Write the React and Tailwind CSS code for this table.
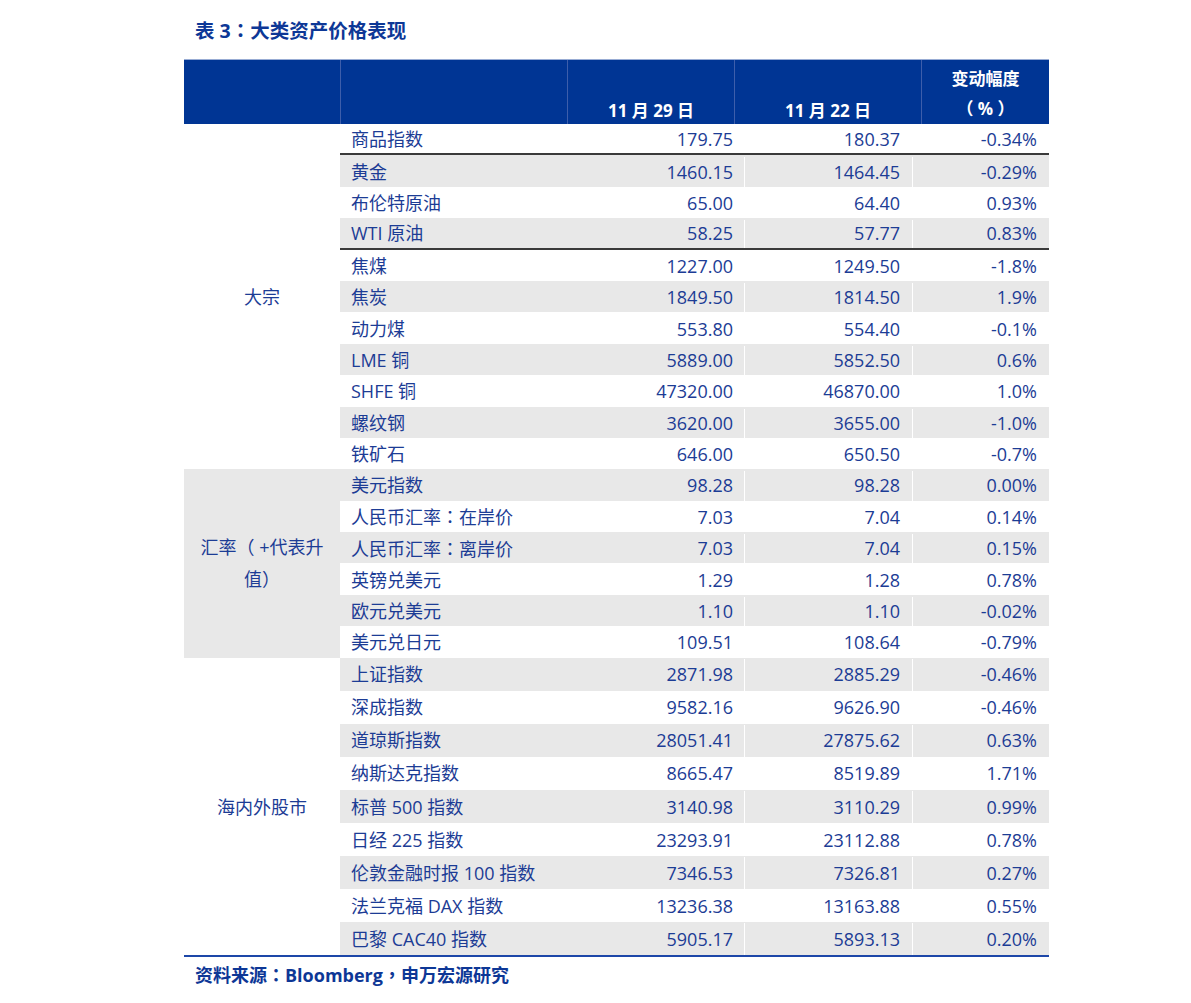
import React from "react";

const P = ({ c }) => (
  <span style={{ fontFamily: '"Noto Sans CJK TC", "Noto Sans CJK SC", sans-serif' }}>{c}</span>
);

const fmt = (s) => {
  const parts = s.split(/([：，])/);
  return parts.map((p, i) => (p === "：" || p === "，" ? <P key={i} c={p} /> : <React.Fragment key={i}>{p}</React.Fragment>));
};

const groups = [
  {
    label: ["大宗"],
    bg: "bg-white",
    h: "h-[31.4px] pt-[2px]",
    rows: [
      ["商品指数", "179.75", "180.37", "-0.34%", "dark"],
      ["黄金", "1460.15", "1464.45", "-0.29%"],
      ["布伦特原油", "65.00", "64.40", "0.93%"],
      ["WTI 原油", "58.25", "57.77", "0.83%", "dark"],
      ["焦煤", "1227.00", "1249.50", "-1.8%"],
      ["焦炭", "1849.50", "1814.50", "1.9%"],
      ["动力煤", "553.80", "554.40", "-0.1%"],
      ["LME 铜", "5889.00", "5852.50", "0.6%"],
      ["SHFE 铜", "47320.00", "46870.00", "1.0%"],
      ["螺纹钢", "3620.00", "3655.00", "-1.0%"],
      ["铁矿石", "646.00", "650.50", "-0.7%"],
    ],
  },
  {
    label: ["汇率（ +代表升", "值）"],
    bg: "bg-[#e8e8e8]",
    h: "h-[31.4px] pt-[2px]",
    rows: [
      ["美元指数", "98.28", "98.28", "0.00%"],
      ["人民币汇率：在岸价", "7.03", "7.04", "0.14%"],
      ["人民币汇率：离岸价", "7.03", "7.04", "0.15%"],
      ["英镑兑美元", "1.29", "1.28", "0.78%"],
      ["欧元兑美元", "1.10", "1.10", "-0.02%"],
      ["美元兑日元", "109.51", "108.64", "-0.79%"],
    ],
  },
  {
    label: ["海内外股市"],
    bg: "bg-white",
    h: "h-[33.1px] pt-[1px]",
    rows: [
      ["上证指数", "2871.98", "2885.29", "-0.46%"],
      ["深成指数", "9582.16", "9626.90", "-0.46%"],
      ["道琼斯指数", "28051.41", "27875.62", "0.63%"],
      ["纳斯达克指数", "8665.47", "8519.89", "1.71%"],
      ["标普 500 指数", "3140.98", "3110.29", "0.99%"],
      ["日经 225 指数", "23293.91", "23112.88", "0.78%"],
      ["伦敦金融时报 100 指数", "7346.53", "7326.81", "0.27%"],
      ["法兰克福 DAX 指数", "13236.38", "13163.88", "0.55%"],
      ["巴黎 CAC40 指数", "5905.17", "5893.13", "0.20%"],
    ],
  },
];

const font = { fontFamily: '"Open Sans", "Noto Sans CJK SC", sans-serif' };

export default function App() {
  let idx = 0;
  return (
    <div className="w-[1191px] h-[1003px] bg-white text-[#1c3c95]" style={font}>
      <div className="pt-[16px] pl-[195px] h-[59px] text-[19.5px] font-bold text-[#0d3796] leading-[28px]">
        表 3{fmt("：")}大类资产价格表现
      </div>
      <div className="ml-[184px] w-[865px]">
        {/* header */}
        <div className="flex h-[65px] bg-[#003594] border-t border-[#98acd4] text-white font-bold text-[17px]">
          <div className="w-[156px]" />
          <div className="w-[227px] border-l border-[#3d5eab]" />
          <div className="w-[167px] border-l border-[#3d5eab] flex items-end justify-center leading-[26px]">
            11 月 29 日
          </div>
          <div className="w-[187px] border-l border-[#3d5eab] flex items-end justify-center leading-[26px]">
            11 月 22 日
          </div>
          <div className="flex-1 border-l border-[#3d5eab] flex flex-col items-center justify-end leading-[30px]">
            <div>变动幅度</div>
            <div>（ % ）</div>
          </div>
        </div>
        {/* body */}
        <div className="border-b-2 border-[#1d47a8] text-[18px]">
          {groups.map((g, gi) => (
            <div key={gi} className="flex">
              <div className={`w-[156px] ${g.bg} flex flex-col items-center justify-center leading-[32px]`}>
                {g.label.map((l, li) => (
                  <div key={li} className="text-center whitespace-nowrap">{l}</div>
                ))}
              </div>
              <div className="flex-1 flex flex-col">
                {g.rows.map((r, ri) => {
                  const gray = idx % 2 === 1;
                  idx++;
                  return (
                    <div
                      key={ri}
                      className={`flex items-center ${g.h} ${gray ? "bg-[#e8e8e8]" : "bg-white"} ${r[4] === "dark" ? "border-b-2 border-[#3a3a3a]" : ""}`}
                    >
                      <div className="w-[227px] pl-[11px] whitespace-nowrap">{fmt(r[0])}</div>
                      <div className="w-[177px] pr-[11px] text-right">{r[1]}</div>
                      <div className="w-[168px] pr-[12px] text-right border-l border-white self-stretch flex items-center justify-end">{r[2]}</div>
                      <div className="flex-1 pr-[12px] text-right border-l border-white self-stretch flex items-center justify-end">{r[3]}</div>
                    </div>
                  );
                })}
              </div>
            </div>
          ))}
        </div>
      </div>
      <div className="pl-[195px] pt-[3px] text-[18px] font-bold text-[#0d3796] leading-[28px]">
        资料来源{fmt("：")}Bloomberg{fmt("，")}申万宏源研究
      </div>
    </div>
  );
}
